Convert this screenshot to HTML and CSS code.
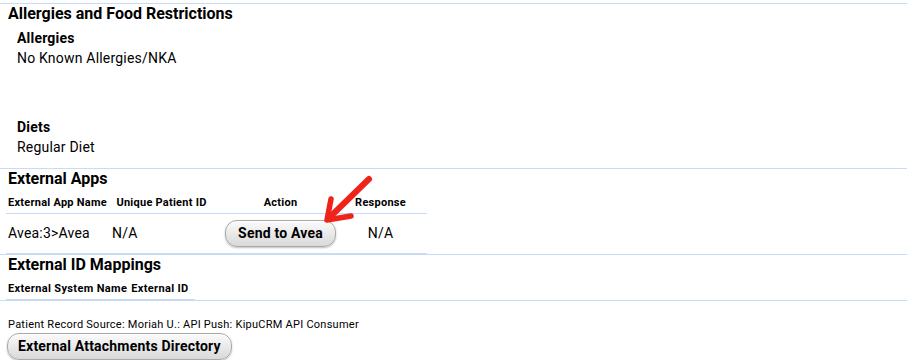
FILE: index.html
```html
<!DOCTYPE html>
<html lang="en">
<head>
  <meta charset="UTF-8">
  <title>Patient Record</title>
  <link rel="stylesheet" href="styles.css">
</head>
<body>

  <div class="page">

    <section class="block">
      <h2 class="block-title">Allergies and Food Restrictions</h2>
      <div class="field allergies">
        <div class="field-label">Allergies</div>
        <div class="field-value">No Known Allergies/NKA</div>
      </div>
      <div class="field">
        <div class="field-label">Diets</div>
        <div class="field-value">Regular Diet</div>
      </div>
    </section>

    <section class="block">
      <h2 class="block-title">External Apps</h2>
      <table class="grid apps">
        <thead>
          <tr>
            <th class="c-name">External App Name</th>
            <th class="c-id">Unique Patient ID</th>
            <th class="c-action">Action</th>
            <th class="c-resp">Response</th>
          </tr>
        </thead>
        <tbody>
          <tr>
            <td class="c-name">Avea:3&gt;Avea</td>
            <td class="c-id">N/A</td>
            <td class="c-action"><button class="btn">Send to Avea</button></td>
            <td class="c-resp">N/A</td>
          </tr>
        </tbody>
      </table>
    </section>

    <section class="block">
      <h2 class="block-title">External ID Mappings</h2>
      <table class="grid mappings">
        <thead>
          <tr>
            <th>External System Name</th>
            <th class="c-ext">External ID</th>
          </tr>
        </thead>
      </table>
    </section>

    <p class="source">Patient Record Source: Moriah U.: API Push: KipuCRM API Consumer</p>
    <button class="btn attach">External Attachments Directory</button>

    <!-- annotation arrow pointing at the send button -->
    <svg class="arrow" width="60" height="60" viewBox="0 0 60 60">
      <path d="M49 9 L10 47" stroke="#f0231a" stroke-width="6" stroke-linecap="round" fill="none"/>
      <polyline points="11,29 7,50 31,46" stroke="#f0231a" stroke-width="5.5" stroke-linecap="round" stroke-linejoin="round" fill="none"/>
    </svg>

  </div>

</body>
</html>
```

FILE: styles.css
```css
body {
  margin: 0;
  font-family: Roboto, 'Liberation Sans', Arial, sans-serif;
  color: #000;
  background: #fff;
}

.page {
  position: relative;
  width: 907px;
  margin-top: 3px;
  border-top: 1px solid #c8dbf6;
}

.block {
  border-bottom: 1px solid #c8dbf6;
}

.block-title {
  margin: 0 0 0 8px;
  font-size: 16px;
  font-weight: bold;
  line-height: 19px;
}

.field {
  margin-left: 17px;
  font-size: 14px;
  line-height: 20px;
  letter-spacing: 0.2px;
}

.field:first-of-type {
  margin-top: 5px;
}

.field.allergies {
  margin-bottom: 49px;
}

.field:last-child {
  padding-bottom: 11px;
}

.field-label {
  font-weight: bold;
}

/* tables */

.grid {
  margin: 4px 0 0 6px;
  border-collapse: collapse;
}

.grid th {
  font-size: 11px;
  font-weight: bold;
  line-height: 14px;
  letter-spacing: 0.25px;
  padding: 4px 2px 3px;
  border-bottom: 1px solid #c8dbf6;
  white-space: nowrap;
}

.grid td {
  font-size: 14px;
  line-height: 20px;
  letter-spacing: 0.2px;
  padding: 6px 2px;
  vertical-align: baseline;
  border-bottom: 1px solid #c8dbf6;
}

.apps {
  table-layout: fixed;
  width: 421px;
}

.apps .c-name { width: 100px; text-align: left; }
.apps .c-id { width: 99px; }
.apps .c-action { width: 131px; text-align: center; }
.apps .c-resp { width: 61px; text-align: center; padding-right: 16px; }
.apps td.c-id { text-align: left; }

.mappings th {
  text-align: left;
  letter-spacing: 0.35px;
}

.mappings .c-ext {
  padding-right: 6px;
}

/* footer */

.source {
  margin: 17px 0 0 8px;
  font-size: 11px;
  line-height: 14px;
  letter-spacing: 0.25px;
}

.btn {
  display: inline-block;
  font-family: Roboto, 'Liberation Sans', Arial, sans-serif;
  font-size: 14px;
  font-weight: bold;
  line-height: 16px;
  letter-spacing: 0.2px;
  color: #000;
  padding: 4px 12px 5px;
  border: 1px solid #a9a9a9;
  border-radius: 12px;
  background: linear-gradient(#fbfbfb, #e6e6e6 60%, #d9d9d9);
  box-shadow: inset 0 1px 0 #fff, 0 1px 2px rgba(0, 0, 0, 0.25);
  cursor: pointer;
}

.btn.attach {
  margin: 1px 0 0 7px;
  padding: 4px 10px 5px;
}

.arrow {
  position: absolute;
  left: 320px;
  top: 166px;
}
```
